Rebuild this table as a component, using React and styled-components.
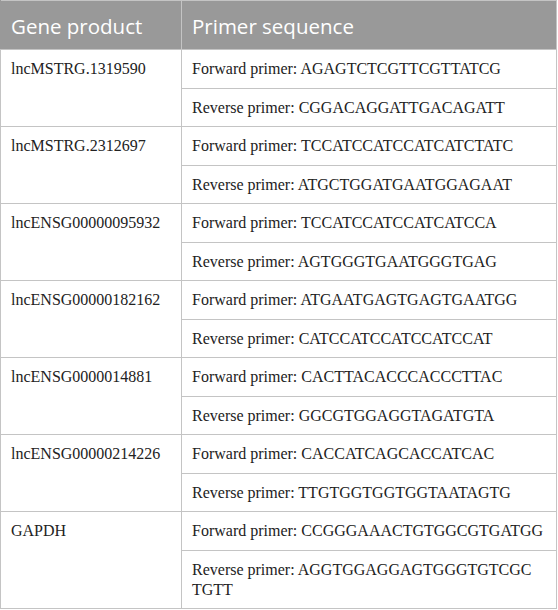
import React from "react";
import styled, { createGlobalStyle } from "styled-components";

const Global = createGlobalStyle`
  html, body { margin: 0; padding: 0; background: #fff; }
`;

const Table = styled.table`
  width: 557px;
  border-collapse: collapse;
  table-layout: fixed;
  border: 1px solid #c4c4c4;
`;

const HeadCell = styled.th`
  background: #999999;
  color: #ffffff;
  font-family: "Open Sans", "Noto Sans", sans-serif;
  font-weight: 400;
  font-size: 20.5px;
  line-height: 30px;
  text-align: left;
  padding: 10px 10px 8px;
  border: 1px solid #c4c4c4;
  border-top: none;
  border-left-color: ${(p) => (p.$first ? "#999999" : "#b0b0b0")};
`;

const Cell = styled.td`
  font-family: "Liberation Serif", "Times New Roman", serif;
  font-size: 16px;
  line-height: 20px;
  color: #222;
  padding: 9px 10px 8.5px;
  border: 1px solid #c4c4c4;
  vertical-align: top;
  white-space: nowrap;
`;

const rows = [
  ["lncMSTRG.1319590", "AGAGTCTCGTTCGTTATCG", "CGGACAGGATTGACAGATT"],
  ["lncMSTRG.2312697", "TCCATCCATCCATCATCTATC", "ATGCTGGATGAATGGAGAAT"],
  ["lncENSG00000095932", "TCCATCCATCCATCATCCA", "AGTGGGTGAATGGGTGAG"],
  ["lncENSG00000182162", "ATGAATGAGTGAGTGAATGG", "CATCCATCCATCCATCCAT"],
  ["lncENSG0000014881", "CACTTACACCCACCCTTAC", "GGCGTGGAGGTAGATGTA"],
  ["lncENSG00000214226", "CACCATCAGCACCATCAC", "TTGTGGTGGTGGTAATAGTG"],
  ["GAPDH", "CCGGGAAACTGTGGCGTGATGG", ["AGGTGGAGGAGTGGGTGTCGC", "TGTT"]],
];

export default function App() {
  return (
    <>
      <Global />
      <Table>
        <colgroup>
          <col style={{ width: "181px" }} />
          <col />
        </colgroup>
        <thead>
          <tr>
            <HeadCell $first>Gene product</HeadCell>
            <HeadCell>Primer sequence</HeadCell>
          </tr>
        </thead>
        <tbody>
          {rows.map(([gene, fwd, rev]) => (
            <React.Fragment key={gene}>
              <tr>
                <Cell rowSpan={2}>{gene}</Cell>
                <Cell>Forward primer: {fwd}</Cell>
              </tr>
              <tr>
                <Cell>
                  Reverse primer:{" "}
                  {Array.isArray(rev) ? (
                    <>
                      {rev[0]}
                      <br />
                      {rev[1]}
                    </>
                  ) : (
                    rev
                  )}
                </Cell>
              </tr>
            </React.Fragment>
          ))}
        </tbody>
      </Table>
    </>
  );
}
